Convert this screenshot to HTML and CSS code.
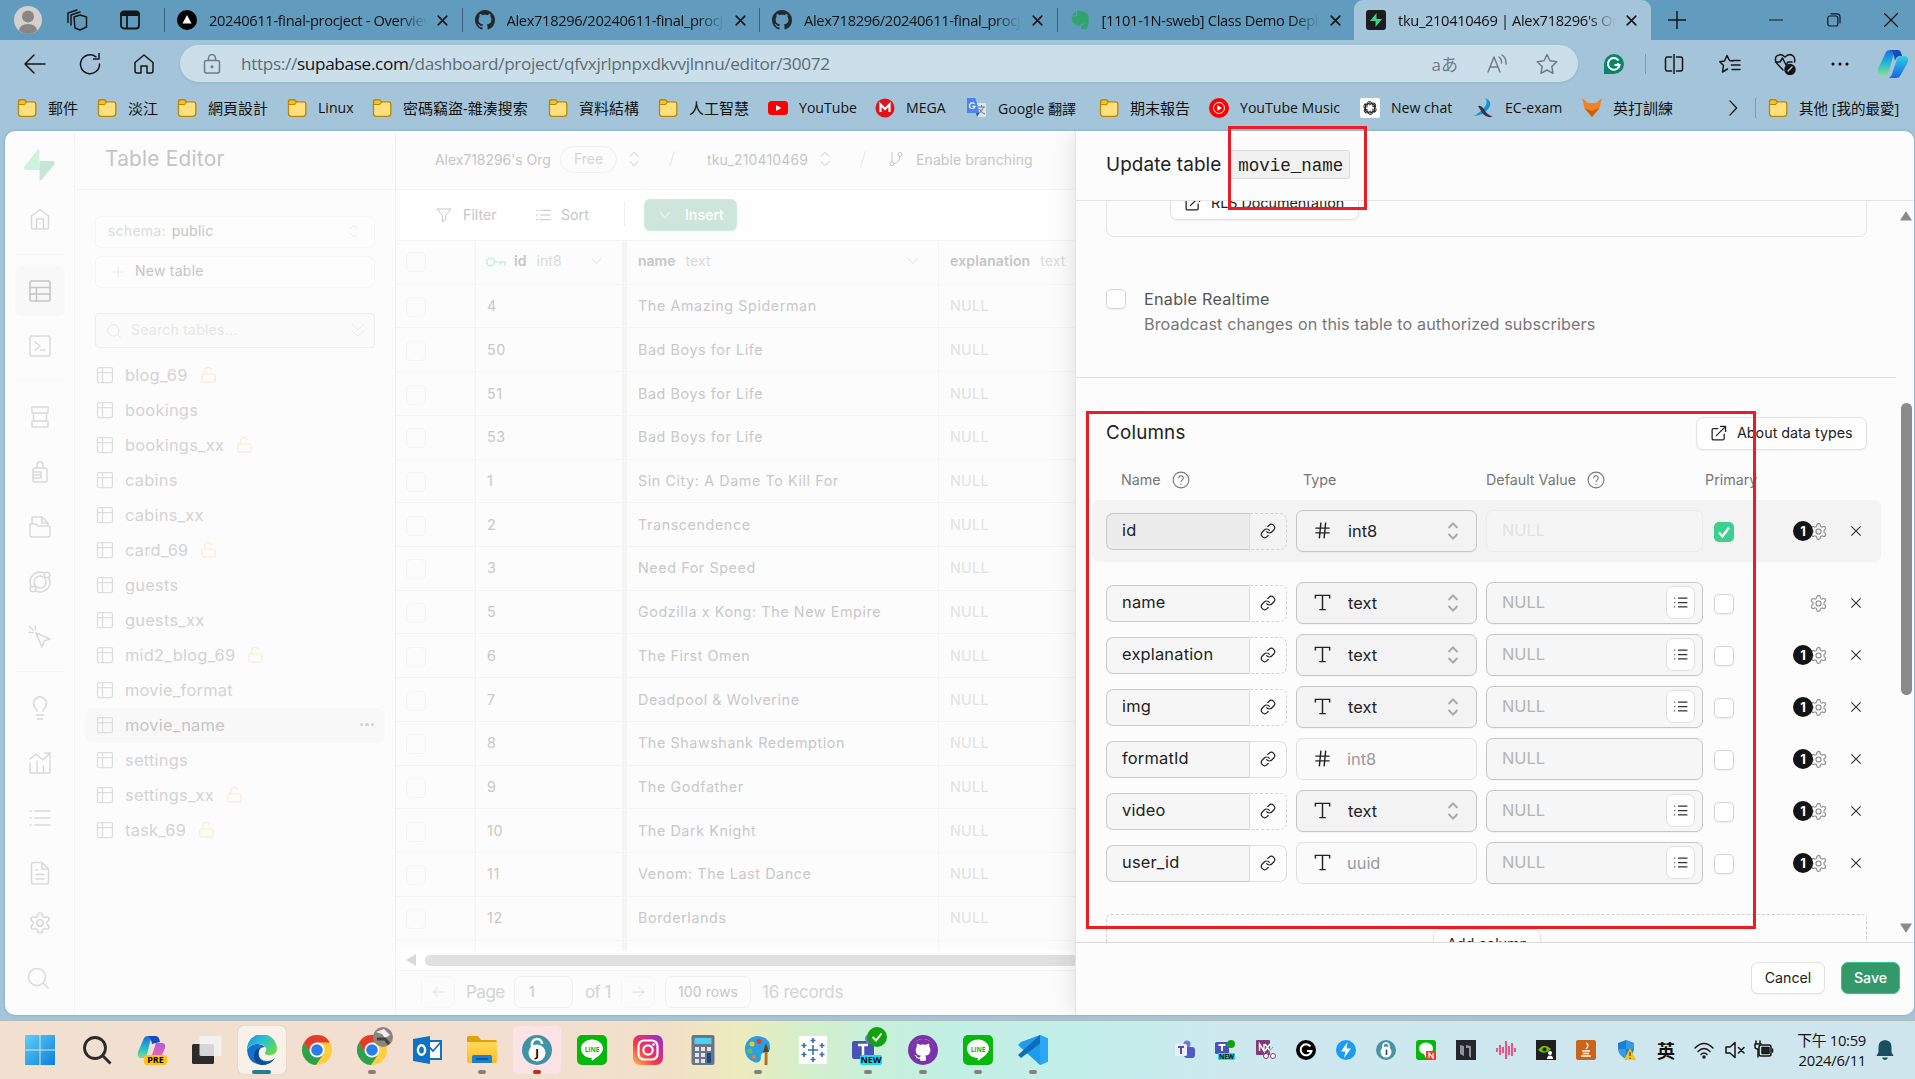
FILE: index.html
```html
<!DOCTYPE html>
<html lang="zh-Hant">
<head>
<meta charset="utf-8">
<title>tku_210410469 | Alex718296's Org | Supabase</title>
<link rel="stylesheet" href="styles.css">
</head>
<body>
<svg class="defs" aria-hidden="true">
  <defs>
    <linearGradient id="g-edge" x1="0" y1="0" x2="1" y2=".6"><stop offset="0" stop-color="#1a8fe0"/><stop offset=".5" stop-color="#2bbfd8"/><stop offset="1" stop-color="#5fd84f"/></linearGradient>
    <linearGradient id="g-ig" x1="0" y1="1" x2="1" y2="0"><stop offset="0" stop-color="#fdc04b"/><stop offset=".4" stop-color="#f2384a"/><stop offset=".75" stop-color="#c32aa3"/><stop offset="1" stop-color="#6a45d6"/></linearGradient>
    <linearGradient id="g-cop1" x1="0" y1="0" x2="0" y2="1"><stop offset="0" stop-color="#1a6fd8"/><stop offset=".5" stop-color="#20b4d8"/><stop offset="1" stop-color="#7fe08a"/></linearGradient>
    <linearGradient id="g-cop2" x1="0" y1="0" x2="0" y2="1"><stop offset="0" stop-color="#2fd0e0"/><stop offset="1" stop-color="#1a62e8"/></linearGradient>
    <linearGradient id="g-cop3" x1="0" y1="0" x2="0" y2="1"><stop offset="0" stop-color="#b25be8"/><stop offset="1" stop-color="#f46a8c"/></linearGradient>
    <linearGradient id="g-win" x1="0" y1="0" x2="1" y2="1"><stop offset="0" stop-color="#5fd0fa"/><stop offset="1" stop-color="#0a7fd6"/></linearGradient>
    <linearGradient id="g-fold" x1="0" y1="0" x2="0" y2="1"><stop offset="0" stop-color="#ffd95c"/><stop offset="1" stop-color="#fbbd22"/></linearGradient>
  </defs>
  <symbol id="folder" viewBox="0 0 20 20"><path d="M1.5 3.5Q1.500 1.800 3.200 1.800H7.500L9.500 3.800H16.500Q18.800 3.800 18.800 6V15.500Q18.800 18.300 16 18.300H4Q1.500 18.300 1.500 15.500Z" fill="#ffe07d" stroke="#b8860b" stroke-width="1.300"/><path d="M1.600 6.500V3.800Q1.600 1.900 3.500 1.900H7.500L9.500 4 7.500 6.500Z" fill="#f5c518" stroke="#b8860b" stroke-width="1.200"/></symbol>
  <symbol id="x" viewBox="0 0 24 24"><path d="M4 4 20 20M20 4 4 20"/></symbol>
  <symbol id="github" viewBox="0 0 16 16"><path d="M8 0C3.580 0 0 3.580 0 8c0 3.540 2.290 6.530 5.470 7.590.4.070.55-.17.55-.38 0-.19-.01-.82-.01-1.490-2.010.37-2.530-.49-2.690-.94-.09-.23-.48-.94-.82-1.130-.28-.15-.68-.52-.01-.53.630-.01 1.080.58 1.230.82.720 1.210 1.870.87 2.330.66.070-.52.280-.87.510-1.070-1.780-.2-3.640-.89-3.640-3.950 0-.87.310-1.590.82-2.150-.08-.2-.36-1.020.080-2.120 0 0 .67-.21 2.200.82.640-.18 1.320-.27 2-.27s1.360.09 2 .27c1.530-1.040 2.200-.82 2.200-.82.440 1.100.160 1.920.080 2.120.51.560.82 1.270.82 2.150 0 3.070-1.870 3.750-3.650 3.950.29.250.54.730.54 1.480 0 1.070-.01 1.930-.01 2.200 0 .21.150.46.550.38A8.010 8.010 0 0 0 16 8c0-4.420-3.580-8-8-8Z"/></symbol>
  <symbol id="tbl" viewBox="0 0 24 24"><rect x="3" y="3" width="18" height="18" rx="2"/><path d="M3 9H21M9 3V21"/></symbol>
  <symbol id="unlock" viewBox="0 0 24 24"><rect x="2.500" y="11.500" width="19" height="11" rx="2"/><path d="M6.500 11.500V7a5 5 0 0 1 9.800-1.200"/></symbol>
  <symbol id="updown" viewBox="0 0 24 24"><path d="m6 8 6-6 6 6M6 16l6 6 6-6"/></symbol>
  <symbol id="down" viewBox="0 0 24 24"><path d="m5 8 7 8 7-8"/></symbol>
  <symbol id="ext" viewBox="0 0 24 24"><path d="M20 13v6a2 2 0 0 1-2 2H5a2 2 0 0 1-2-2V7a2 2 0 0 1 2-2h6M15 2h7v7M9 15 22 2"/></symbol>
  <symbol id="link" viewBox="0 0 24 24"><path d="M10 13a5 5 0 0 0 7.540.54l3-3a5 5 0 0 0-7.070-7.070l-1.720 1.710M14 11a5 5 0 0 0-7.540-.54l-3 3a5 5 0 0 0 7.070 7.070l1.710-1.710"/></symbol>
  <symbol id="hash" viewBox="0 0 24 24"><path d="M3 9H21M3 15H21M10 2 8 22M16 2l-2 20"/></symbol>
  <symbol id="tee" viewBox="0 0 24 24"><path d="M3 7V3H21V7M12 3V21M8 21H16"/></symbol>
  <symbol id="list" viewBox="0 0 24 24"><path d="M8 5H23M8 12H23M8 19H23M2 5h1.500M2 12h1.500M2 19h1.500"/></symbol>
  <symbol id="gear" viewBox="0 0 24 24"><path d="M12.220 2h-.44a2 2 0 0 0-2 2v.18a2 2 0 0 1-1 1.730l-.43.25a2 2 0 0 1-2 0l-.15-.08a2 2 0 0 0-2.730.73l-.22.38a2 2 0 0 0 .73 2.730l.15.1a2 2 0 0 1 1 1.720v.51a2 2 0 0 1-1 1.740l-.15.09a2 2 0 0 0-.73 2.730l.22.38a2 2 0 0 0 2.730.73l.15-.08a2 2 0 0 1 2 0l.43.25a2 2 0 0 1 1 1.730V20a2 2 0 0 0 2 2h.44a2 2 0 0 0 2-2v-.18a2 2 0 0 1 1-1.730l.43-.25a2 2 0 0 1 2 0l.15.08a2 2 0 0 0 2.730-.73l.22-.39a2 2 0 0 0-.73-2.730l-.15-.08a2 2 0 0 1-1-1.740v-.5a2 2 0 0 1 1-1.740l.15-.09a2 2 0 0 0 .73-2.730l-.22-.38a2 2 0 0 0-2.730-.73l-.15.08a2 2 0 0 1-2 0l-.43-.25a2 2 0 0 1-1-1.730V4a2 2 0 0 0-2-2z"/><circle cx="12" cy="12" r="3.200"/></symbol>
  <symbol id="help" viewBox="0 0 24 24"><circle cx="12" cy="12" r="10.500"/><path d="M9 9a3 3 0 0 1 6 .8c0 2-3 2.600-3 4.200M12 17.500v.4"/></symbol>
  <symbol id="search" viewBox="0 0 24 24"><circle cx="11" cy="11" r="8.500"/><path d="m22 22-5-5"/></symbol>
  <symbol id="line" viewBox="0 0 30 30"><rect width="30" height="30" rx="5" fill="#06b80b"/><path d="M15 4.500c6 0 11 4 11 9 0 4.500-5 8-10.500 12-.8.500-1-.2-.8-2.400C8.500 22.800 4 19 4 13.500c0-5 5-9 11-9Z" fill="#fff"/><text x="15" y="16.500" font-size="6.500" font-weight="700" text-anchor="middle" fill="#06b80b">LINE</text></symbol>
  <symbol id="chrome" viewBox="0 0 30 30"><circle cx="15" cy="15" r="15" fill="#ffcd40"/><path d="M2 7.500A15 15 0 0 0 14 30L21.500 18.700 9 18.500Z" fill="#2ba24c"/><path d="M2 7.500A15 15 0 0 1 28 7.500H15L9 19Z" fill="#e33b2e"/><circle cx="15" cy="15" r="7.500" fill="#fff"/><circle cx="15" cy="15" r="5.800" fill="#2b7de9"/></symbol>
</svg>

<header class="browser">
  <div class="tabstrip">
    <div class="winctl-left">
      <svg width="28" height="28" viewBox="0 0 28 28"><circle cx="14" cy="14" r="14" fill="#d3d0cd"/><circle cx="14" cy="10.500" r="6" fill="#8a8684"/><path d="M5 24.500Q6 18 14 18T23 24.500Q19 28 14 28T5 24.500Z" fill="#8a8684"/></svg>
      <svg class="st" width="24" height="24" viewBox="0 0 24 24"><path d="M9 9 15 7 21.500 9V19L15 22 10 20ZM6 17V7L15 4M3 14.500V5L12 2"/></svg>
      <svg class="st" width="22" height="22" viewBox="0 0 22 22" stroke-width="2"><rect x="2" y="2.500" width="18" height="17" rx="3"/><path class="bar" d="M3 5H19"/><path d="M8 6V19"/></svg>
    </div>
    <div class="tab"><svg width="20" height="20" viewBox="0 0 20 20"><circle cx="10" cy="10" r="10"/><path d="M10 5 14.500 13.500H5.500Z" fill="#fff"/></svg><span>20240611-final-procject - Overview</span><svg class="st tx"><use href="#x"/></svg></div>
    <div class="tab"><svg width="20" height="20" fill="#24292f"><use href="#github"/></svg><span>Alex718296/20240611-final_procject</span><svg class="st tx"><use href="#x"/></svg></div>
    <div class="tab"><svg width="20" height="20" fill="#24292f"><use href="#github"/></svg><span>Alex718296/20240611-final_procject</span><svg class="st tx"><use href="#x"/></svg></div>
    <div class="tab"><svg width="20" height="20" viewBox="0 0 20 20" fill="#2fa56c"><path d="M2 5.500 6 1.500V5.500ZM7 1Q12 0 15 2.500 18 3 18.500 7 19.500 19 14.500 19.500 10.500 19.500 11 16 12 14 14 15V13.500Q10 13 10 16 4 15.500 2 10 1 7 2 6.500H7Z"/></svg><span>[1101-1N-sweb] Class Demo Deployment</span><svg class="st tx"><use href="#x"/></svg></div>
    <div class="tab on"><svg width="20" height="20" viewBox="0 0 20 20"><rect width="20" height="20" rx="3" fill="#1c1c1c"/><path d="M10.500 3v6H16L9.500 17V11H4Z" fill="#3ecf8e"/></svg><span>tku_210410469 | Alex718296's Org</span><svg class="st tx"><use href="#x"/></svg></div>
    <svg class="st plus" width="18" height="18" viewBox="0 0 18 18"><path d="M9 0V18M0 9H18"/></svg>
    <div class="winctl">
      <svg class="st" width="14" height="14" viewBox="0 0 14 14"><path d="M0 7H14"/></svg>
      <svg class="st" width="14" height="14" viewBox="0 0 14 14"><rect x=".8" y="3" width="10" height="10" rx="2"/><path d="M4 .8H10Q13 .8 13 4V10"/></svg>
      <svg class="st" width="14" height="14" viewBox="0 0 14 14"><path d="M.5.500 13.500 13.500M13.500.500.500 13.500"/></svg>
    </div>
  </div>
  <div class="toolbar">
    <div class="nav">
      <svg class="st" width="22" height="20" viewBox="0 0 22 20"><path d="M21 10H1M10 1 1 10l9 9"/></svg>
      <svg class="st" width="22" height="22" viewBox="0 0 22 22"><path d="M20.500 11A9.500 9.500 0 1 1 17 3.800M20 .5V6H14.500"/></svg>
      <svg class="st" width="20" height="20" viewBox="0 0 20 20"><path d="M1 8.500 10 1l9 7.500V17q0 2-2 2H13V12H7v7H3q-2 0-2-2Z"/></svg>
    </div>
    <div class="omni">
      <svg class="st grey" width="18" height="20" viewBox="0 0 18 20"><rect x="1.500" y="6.500" width="15" height="12.500" rx="2"/><path d="M5.500 6V4a3.500 3.500 0 0 1 7 0V6"/><circle cx="9" cy="12.800" r=".8"/></svg>
      <div class="url">https://<b>supabase.com</b>/dashboard/project/qfvxjrlpnpxdkvvjlnnu/editor/30072</div>
      <span class="aa">aあ</span>
      <svg class="st grey" width="20" height="20" viewBox="0 0 20 20"><path d="M1 18 7 3l6 15M3 13h8M12 3q3 2 2.500 6M15 1q4.500 3 4 9"/></svg>
      <svg class="st grey" width="22" height="22" viewBox="0 0 22 22"><path d="m11 1.500 3 6.300 6.800.9-5 4.800 1.200 6.800-6-3.300-6 3.300 1.200-6.800-5-4.800 6.800-.9Z"/></svg>
    </div>
    <div class="ext">
      <svg width="20" height="20" viewBox="0 0 20 20"><path d="M0 10a10 10 0 1 1 10 10H0Z" fill="#0e8467"/><path d="M14.500 6.500A5.800 5.800 0 1 0 15.500 11H10.500M13 9.500 15.500 11 14.500 14" fill="none" stroke="#fff" stroke-width="2"/></svg>
      <i></i>
      <svg class="st" width="20" height="20" viewBox="0 0 20 20"><path d="M7.500 3H3.500q-2 0-2 2V15q0 2 2 2H7.500M12.500 3h4q2 0 2 2V15q0 2-2 2h-4M10 0V20"/></svg>
      <svg class="st" width="22" height="20" viewBox="0 0 22 20"><path d="M14 7 10.500 6.500 8 1.500 5.500 7 .8 7.800 4.500 11.500 3.500 18 8.500 15M14 6.500H21M12.500 11H21M13 15.500h8"/></svg>
      <svg class="st" width="22" height="22" viewBox="0 0 22 22"><path d="M9 17 2.500 10Q0 5.500 3 2.800 7 0 11 4 15 0 19 2.800 21.500 5 20.500 9M1.500 9H6L8.500 5l3.500 7L14 9h4"/><circle cx="16" cy="16.500" r="5" fill="#111"/><path d="m14 18 4-4" stroke="#a4c5d9"/></svg>
      <svg width="18" height="4" viewBox="0 0 18 4"><circle cx="2" cy="2" r="1.500"/><circle cx="9" cy="2" r="1.500"/><circle cx="16" cy="2" r="1.500"/></svg>
      <svg width="32" height="28" viewBox="0 0 32 28"><path d="M9 2Q10 0 13 0H21Q17 2 16 7L12 21Q11 25 8 25H4Q0 24 1 19Z" fill="url(#g-cop1)"/><path d="M23 26Q22 28 19 28H12Q15 26 16 21L20 9Q21 6 24 6H28Q32 7 31 12Z" fill="url(#g-cop2)"/><path d="M13 0h8q3 0 4 6h-3q-3 1-4 5L17 6Q16 1 13 0Z" fill="#1a4bbd"/></svg>
    </div>
  </div>
  <nav class="bookmarks">
    <a><svg><use href="#folder"/></svg>郵件</a>
    <a><svg><use href="#folder"/></svg>淡江</a>
    <a><svg><use href="#folder"/></svg>網頁設計</a>
    <a class="en"><svg><use href="#folder"/></svg>Linux</a>
    <a><svg><use href="#folder"/></svg>密碼竊盜-雜湊搜索</a>
    <a><svg><use href="#folder"/></svg>資料結構</a>
    <a><svg><use href="#folder"/></svg>人工智慧</a>
    <a class="en"><svg viewBox="0 0 20 20"><rect y="3" width="20" height="14" rx="3.500" fill="#f00"/><path d="m8 7 5.500 3L8 13Z" fill="#fff"/></svg>YouTube</a>
    <a class="en"><svg viewBox="0 0 20 20"><circle cx="10" cy="10" r="9.500" fill="#e0131c"/><path d="M5.500 14V6.500L10 11l4.500-4.500V14" fill="none" stroke="#fff" stroke-width="2.200"/></svg>MEGA</a>
    <a class="en"><svg viewBox="0 0 20 20"><path d="M7 5H19V19H10Z" fill="#dfe3e8"/><path d="M11 9H18M14.500 7V9M16.500 9Q15 14 11 16M12.500 11Q14 15 18 16" stroke="#6b7785" fill="none"/><path d="M0 0H8.500L12.500 15H0Z" fill="#4a86f0"/><path d="M9 15h3.500L10 19Z" fill="#2a55b8"/><path d="M7.500 6A2.800 2.800 0 1 0 8 8.300H5.500" fill="none" stroke="#fff" stroke-width="1.200"/></svg>Google 翻譯</a>
    <a><svg><use href="#folder"/></svg>期末報告</a>
    <a class="en"><svg viewBox="0 0 20 20"><circle cx="10" cy="10" r="10" fill="#f00"/><circle cx="10" cy="10" r="5.500" fill="none" stroke="#fff"/><path d="m8.300 7 4.500 3-4.500 3Z" fill="#fff"/></svg>YouTube Music</a>
    <a class="en"><svg viewBox="0 0 20 20"><rect width="20" height="20" rx="2" fill="#fff"/><g fill="none" stroke="#222" stroke-width="1"><path id="petal" d="M7 9.500V6a2.600 2.600 0 0 1 4.800-1.200M7 6.500 10 4.800l4 2.300"/><use href="#petal" transform="rotate(60 10 10)"/><use href="#petal" transform="rotate(120 10 10)"/><use href="#petal" transform="rotate(180 10 10)"/><use href="#petal" transform="rotate(240 10 10)"/><use href="#petal" transform="rotate(300 10 10)"/></g></svg>New chat</a>
    <a class="en"><svg viewBox="0 0 20 20"><path d="M11 0Q19 3 15 10 10 17 0 18 8 13 11.500 8 14 3 11 0Z" fill="#1593d2"/><path d="M4 8Q7 7 10.500 12 14 18 19 18 14 21 9 16Z" fill="#334"/></svg>EC-exam</a>
    <a><svg viewBox="0 0 20 20"><path d="M0 0 6 5H14L20 0 17.500 10 10 19 2.500 10Z" fill="#f5821f"/><path d="m2.500 10 7.500 9 7.500-9L10 13Z" fill="#c95f0c"/></svg>英打訓練</a>
    <svg class="st chev" viewBox="0 0 10 18"><path d="m1 1 7.500 8L1 17"/></svg>
    <i></i>
    <a class="mix"><svg><use href="#folder"/></svg>其他 [我的最愛]</a>
  </nav>
</header>

<main class="page">
  <aside class="rail">
    <svg class="logo" width="31" height="32" viewBox="0 0 31 32"><path d="M13.500.8Q15.500-.8 15.500 1.500V21H2Q-.8 20 .8 17Z" fill="#cdf2e0"/><path d="M15.500 12H29Q32 13 30 16L17.500 31Q15.500 32 15.500 30Z" fill="#c3e6d5"/></svg>
    <div class="ri"><svg viewBox="0 0 24 24"><path d="M3.500 9 12 2.500 20.500 9V20a2 2 0 0 1-2 2H5.500a2 2 0 0 1-2-2ZM8.500 22V12h7V22"/></svg></div>
    <hr>
    <div class="ri act"><svg viewBox="0 0 24 24"><rect x="2" y="2" width="20" height="20" rx="1.500"/><path d="M2 8.500H22M2 15H22M8.500 8.500V22"/></svg></div>
    <div class="ri"><svg viewBox="0 0 24 24"><rect x="2" y="2" width="20" height="20" rx="1.500"/><path d="m7 8 5 4-5 4M12.500 16H17"/></svg></div>
    <hr>
    <div class="ri"><svg viewBox="0 0 24 24"><path d="M4 2H20V8H4ZM4 16H20V22H4ZM5.500 8V16M18.500 8V16"/></svg></div>
    <div class="ri"><svg viewBox="0 0 24 24"><rect x="5" y="8" width="14" height="14" rx="2"/><path d="M9 8V5a3 3 0 0 1 6 0V8M5 12h8v6H5M5 15h8"/></svg></div>
    <div class="ri"><svg viewBox="0 0 24 24"><path d="M2 9H8L10 11H20q2 0 2 2V20q0 2-2 2H4q-2 0-2-2ZM4 9V2H14L20 8V11M14 2V8H20"/></svg></div>
    <div class="ri"><svg viewBox="0 0 24 24"><circle cx="12" cy="12" r="10"/><circle cx="12" cy="12" r="6"/><circle class="f" cx="19" cy="5" r="2.800"/><circle class="f" cx="5" cy="19" r="2.800"/></svg></div>
    <div class="ri"><svg viewBox="0 0 24 24"><path d="M8 8 22 14 16 16 14 22ZM1.500 1.500 5 5M7.500 1V5M1 7.500H5"/></svg></div>
    <hr>
    <div class="ri"><svg viewBox="0 0 24 24"><path d="M9 15Q9 13 7 11.500A6.500 6.500 0 1 1 17 11.500Q15 13 15 15M8.500 19h7M9.500 23h5"/></svg></div>
    <div class="ri"><svg viewBox="0 0 24 24"><path d="M2 12V22H22V9M9 22V10M15.500 22V15M2 8 8 3l7 6L22 2M17 2h5V7"/></svg></div>
    <div class="ri"><svg viewBox="0 0 24 24"><path d="M7 5H22M7 12H22M7 19H22M2 5h1M2 12h1M2 19h1"/></svg></div>
    <div class="ri"><svg viewBox="0 0 24 24"><path d="M14 1.500H5.500q-2 0-2 2V21q0 2 2 2H18.500q2 0 2-2V8ZM14 1.500V8H20.500M8 9h2M8 13.500h8M8 18h8"/></svg></div>
    <div class="ri"><svg><use href="#gear"/></svg></div>
    <div class="ri sr"><svg><use href="#search"/></svg></div>
  </aside>

  <aside class="tables">
    <h1>Table Editor</h1>
    <div class="box schema"><span>schema:</span> public<svg class="si"><use href="#updown"/></svg></div>
    <div class="box newt"><svg class="si" viewBox="0 0 24 24"><path d="M12 3V21M3 12H21"/></svg>New table</div>
    <div class="box find"><svg class="si"><use href="#search"/></svg>Search tables...<svg class="si" viewBox="0 0 24 24"><path d="m3 3 9 8 9-8M3 13l9 8 9-8"/></svg></div>
    <ul>
      <li><svg><use href="#tbl"/></svg>blog_69<svg class="u"><use href="#unlock"/></svg></li>
      <li><svg><use href="#tbl"/></svg>bookings</li>
      <li><svg><use href="#tbl"/></svg>bookings_xx<svg class="u"><use href="#unlock"/></svg></li>
      <li><svg><use href="#tbl"/></svg>cabins</li>
      <li><svg><use href="#tbl"/></svg>cabins_xx</li>
      <li><svg><use href="#tbl"/></svg>card_69<svg class="u"><use href="#unlock"/></svg></li>
      <li><svg><use href="#tbl"/></svg>guests</li>
      <li><svg><use href="#tbl"/></svg>guests_xx</li>
      <li><svg><use href="#tbl"/></svg>mid2_blog_69<svg class="u"><use href="#unlock"/></svg></li>
      <li><svg><use href="#tbl"/></svg>movie_format</li>
      <li class="cur"><svg><use href="#tbl"/></svg>movie_name<em><b></b><b></b><b></b></em></li>
      <li><svg><use href="#tbl"/></svg>settings</li>
      <li><svg><use href="#tbl"/></svg>settings_xx<svg class="u"><use href="#unlock"/></svg></li>
      <li><svg><use href="#tbl"/></svg>task_69<svg class="u"><use href="#unlock"/></svg></li>
    </ul>
  </aside>

  <section class="editor">
    <div class="crumbs"><span class="org">Alex718296's Org</span><span class="pill">Free</span><svg class="si c1"><use href="#updown"/></svg><svg class="si sl" viewBox="0 0 8 20"><path d="M7 1 1 19"/></svg><span class="prj">tku_210410469</span><svg class="si c2"><use href="#updown"/></svg><svg class="si sl s2" viewBox="0 0 8 20"><path d="M7 1 1 19"/></svg><svg class="si br" viewBox="0 0 24 24"><path d="M6 2V16M18 8Q18 17 9 19"/><circle cx="18" cy="5" r="3"/><circle cx="6" cy="19" r="3"/></svg><span class="enb">Enable branching</span></div>
    <div class="actions"><svg class="si" viewBox="0 0 24 24"><path d="M2 3H22L14.500 12.500V19L9.500 22V12.500Z"/></svg><span class="fl">Filter</span><svg class="si"><use href="#list"/></svg><span class="so">Sort</span><i></i><div class="insert"><svg class="si"><use href="#down"/></svg>Insert</div></div>
    <div class="grid">
      <div class="r h"><div><i class="cb"></i></div><div><svg class="key" viewBox="0 0 20 12"><circle cx="4.500" cy="6" r="3.800"/><path d="M8.500 6H19V9.500M14.500 6V9"/></svg><b>id</b><span>int8</span><svg class="si"><use href="#down"/></svg></div><div><b>name</b><span>text</span><svg class="si"><use href="#down"/></svg></div><div><b>explanation</b><span>text</span></div></div>
      <div class="r"><div><i class="cb"></i></div><div>4</div><div>The Amazing Spiderman</div><div>NULL</div></div>
      <div class="r"><div><i class="cb"></i></div><div>50</div><div>Bad Boys for Life</div><div>NULL</div></div>
      <div class="r"><div><i class="cb"></i></div><div>51</div><div>Bad Boys for Life</div><div>NULL</div></div>
      <div class="r"><div><i class="cb"></i></div><div>53</div><div>Bad Boys for Life</div><div>NULL</div></div>
      <div class="r"><div><i class="cb"></i></div><div>1</div><div>Sin City: A Dame To Kill For</div><div>NULL</div></div>
      <div class="r"><div><i class="cb"></i></div><div>2</div><div>Transcendence</div><div>NULL</div></div>
      <div class="r"><div><i class="cb"></i></div><div>3</div><div>Need For Speed</div><div>NULL</div></div>
      <div class="r"><div><i class="cb"></i></div><div>5</div><div>Godzilla x Kong: The New Empire</div><div>NULL</div></div>
      <div class="r"><div><i class="cb"></i></div><div>6</div><div>The First Omen</div><div>NULL</div></div>
      <div class="r"><div><i class="cb"></i></div><div>7</div><div>Deadpool &amp; Wolverine</div><div>NULL</div></div>
      <div class="r"><div><i class="cb"></i></div><div>8</div><div>The Shawshank Redemption</div><div>NULL</div></div>
      <div class="r"><div><i class="cb"></i></div><div>9</div><div>The Godfather</div><div>NULL</div></div>
      <div class="r"><div><i class="cb"></i></div><div>10</div><div>The Dark Knight</div><div>NULL</div></div>
      <div class="r"><div><i class="cb"></i></div><div>11</div><div>Venom: The Last Dance</div><div>NULL</div></div>
      <div class="r"><div><i class="cb"></i></div><div>12</div><div>Borderlands</div><div>NULL</div></div>
      <div class="r"><div></div><div></div><div></div><div></div></div>
    </div>
    <div class="hscroll"><svg width="10" height="12" viewBox="0 0 10 12"><path d="M10 0V12L0 6Z" fill="#d8d8d8"/></svg><div></div></div>
    <div class="pager"><div class="pb ar"><svg class="si" viewBox="0 0 24 24"><path d="M22 12H2M11 3 2 12l9 9"/></svg></div><span class="pg">Page</span><div class="pb in">1</div><span class="of">of 1</span><div class="pb ar"><svg class="si" viewBox="0 0 24 24"><path d="M2 12H22M13 3l9 9-9 9"/></svg></div><div class="pb rw">100 rows</div><span class="rec">16 records</span></div>
  </section>

  <section class="panel">
    <header>Update table <code>movie_name</code></header>
    <div class="body">
      <div class="content">
        <div class="card"><div class="btn"><svg class="si"><use href="#ext"/></svg>RLS Documentation</div></div>
        <div class="rt"><i class="cb"></i><div><p>Enable Realtime</p><p class="d">Broadcast changes on this table to authorized subscribers</p></div></div>
        <div class="colhead"><h2>Columns</h2><div class="btn"><svg class="si"><use href="#ext"/></svg>About data types</div></div>
        <div class="labels"><span>Name <svg class="si"><use href="#help"/></svg></span><span>Type</span><span>Default Value <svg class="si"><use href="#help"/></svg></span><span>Primary</span></div>
        <div class="cr first"><div class="nm">id</div><div class="lk"><svg><use href="#link"/></svg></div><div class="ty"><svg><use href="#hash"/></svg>int8<svg class="ud"><use href="#updown"/></svg></div><div class="df dis">NULL</div><i class="cb ck"><svg viewBox="0 0 20 20"><path d="m5 10.500 3.500 4 6.500-9"/></svg></i><div class="cfg"><b>1</b><svg><use href="#gear"/></svg></div><svg class="rm"><use href="#x"/></svg></div>
        <div class="cr"><div class="nm">name</div><div class="lk"><svg><use href="#link"/></svg></div><div class="ty"><svg><use href="#tee"/></svg>text<svg class="ud"><use href="#updown"/></svg></div><div class="df">NULL<div><svg><use href="#list"/></svg></div></div><i class="cb"></i><div class="cfg"><svg><use href="#gear"/></svg></div><svg class="rm"><use href="#x"/></svg></div>
        <div class="cr"><div class="nm">explanation</div><div class="lk"><svg><use href="#link"/></svg></div><div class="ty"><svg><use href="#tee"/></svg>text<svg class="ud"><use href="#updown"/></svg></div><div class="df">NULL<div><svg><use href="#list"/></svg></div></div><i class="cb"></i><div class="cfg"><b>1</b><svg><use href="#gear"/></svg></div><svg class="rm"><use href="#x"/></svg></div>
        <div class="cr"><div class="nm">img</div><div class="lk"><svg><use href="#link"/></svg></div><div class="ty"><svg><use href="#tee"/></svg>text<svg class="ud"><use href="#updown"/></svg></div><div class="df">NULL<div><svg><use href="#list"/></svg></div></div><i class="cb"></i><div class="cfg"><b>1</b><svg><use href="#gear"/></svg></div><svg class="rm"><use href="#x"/></svg></div>
        <div class="cr"><div class="nm">formatId</div><div class="lk linked"><svg><use href="#link"/></svg></div><div class="ty ro"><svg><use href="#hash"/></svg>int8</div><div class="df">NULL</div><i class="cb"></i><div class="cfg"><b>1</b><svg><use href="#gear"/></svg></div><svg class="rm"><use href="#x"/></svg></div>
        <div class="cr"><div class="nm">video</div><div class="lk"><svg><use href="#link"/></svg></div><div class="ty"><svg><use href="#tee"/></svg>text<svg class="ud"><use href="#updown"/></svg></div><div class="df">NULL<div><svg><use href="#list"/></svg></div></div><i class="cb"></i><div class="cfg"><b>1</b><svg><use href="#gear"/></svg></div><svg class="rm"><use href="#x"/></svg></div>
        <div class="cr"><div class="nm">user_id</div><div class="lk linked"><svg><use href="#link"/></svg></div><div class="ty ro"><svg><use href="#tee"/></svg>uuid</div><div class="df">NULL<div><svg><use href="#list"/></svg></div></div><i class="cb"></i><div class="cfg"><b>1</b><svg><use href="#gear"/></svg></div><svg class="rm"><use href="#x"/></svg></div>
        <div class="addbox"><div class="btn">Add column</div></div>
      </div>
      <div class="vscroll"><svg width="12" height="10" viewBox="0 0 12 10"><path d="M6 0 12 9.500H0Z"/></svg><div></div><svg width="12" height="10" viewBox="0 0 12 10"><path d="M6 10 12 .5H0Z"/></svg></div>
    </div>
    <footer><div class="btn cancel">Cancel</div><div class="btn save">Save</div></footer>
  </section>
</main>
<div class="mark m1"></div>
<div class="mark m2"></div>

<footer class="taskbar">
  <div class="apps">
    <div><svg viewBox="0 0 30 30" fill="url(#g-win)"><path d="M0 0H14.500V14.500H0ZM15.500 0H30V14.500H15.500ZM0 15.500H14.500V30H0ZM15.500 15.500H30V30H15.500Z"/></svg></div>
    <div><svg viewBox="0 0 30 30" fill="none" stroke="#2b2b2b" stroke-width="2.800"><circle cx="13" cy="13" r="10.500"/><path d="m20.500 20.500 8 8"/></svg></div>
    <div><svg viewBox="0 0 30 30"><path d="M7 3Q8 1 11 1H17Q14 3 13 7L10 20Q9 23 6 23H3Q0 22 1 17Z" fill="url(#g-cop1)"/><path d="M11 1h8q3 0 4 6l-8 2Q14 3 11 1Z" fill="#1a4bbd"/><path d="M23 25H12Q15 22 16 17L19 8H26Q29 9 28 13Z" fill="url(#g-cop3)"/><rect x="7" y="20" width="23" height="10" rx="3" fill="#ffc20e"/><text x="18.500" y="28.300" font-size="9" font-weight="700" text-anchor="middle">PRE</text></svg></div>
    <div><svg viewBox="0 0 30 30"><rect y="9" width="22" height="20" rx="1.500" fill="#2b2b2b"/><rect x="7.500" y="1" width="22" height="20" rx="1.500" fill="#f4f4f4" opacity=".85"/></svg></div>
    <div class="hot run"><svg viewBox="0 0 30 30"><path d="M0 15A15 15 0 0 1 30 13Q30 20 23 20 17.500 20 18 17.500 20 15.500 19 13 17 9 11 9 3 9 0 15Z" fill="url(#g-edge)"/><path d="M0 15Q4 8.500 11 9 16 9.500 18 12 12 12 11.500 18 12 26 20 26 25 26 28 23 23 30 15 30 1 29 0 15Z" fill="#1274c8"/><path d="M13 13Q9 21 15 26 21 30 28 23 24 30 15 30 6 28 7 20 8 14 13 13Z" fill="#0c4a92"/></svg></div>
    <div><svg><use href="#chrome"/></svg></div>
    <div class="dot"><svg class="over" viewBox="0 0 36 38"><use href="#chrome" x="0" y="8" width="30" height="30"/><circle cx="26" cy="10" r="10" fill="#8c8480"/><path d="M19 5 27 2l6 6-5 3-3-4Z" fill="#eee"/><path d="m20 12 8 0 4 5" stroke="#443" stroke-width="3" fill="none"/></svg></div>
    <div><svg viewBox="0 0 30 30"><path d="M14 6H29V24H14Z" fill="#fff" stroke="#0f72c6" stroke-width="2"/><path d="m15 10 6 6 8-9" fill="none" stroke="#0f72c6" stroke-width="1.800"/><path d="M1 4 18 1V29L1 26Z" fill="#0f72c6"/><ellipse cx="9.500" cy="15" rx="3.600" ry="4.800" fill="none" stroke="#fff" stroke-width="2.400"/></svg></div>
    <div class="dot"><svg viewBox="0 0 30 30"><path d="M0 3Q0 1 2 1H11L14 5H28Q30 5 30 7V10H0Z" fill="#e0a10c"/><path d="M0 7H30V26q0 2-2 2H2q-2 0-2-2Z" fill="url(#g-fold)"/><path d="M5 28V22Q5 20 7 20H23q2 0 2 2v6Z" fill="#1c7fd0"/><path d="M9 24H21" stroke="#0f5598" stroke-width="2"/></svg></div>
    <div class="pink"><svg viewBox="0 0 30 30"><circle cx="15" cy="15" r="15" fill="#3e93a5"/><path d="M10 14V9a5 5 0 0 1 10 0" fill="none" stroke="#fff" stroke-width="2.500"/><circle cx="15" cy="18" r="8.500" fill="#fff"/><text x="15" y="22" font-size="11" font-weight="700" text-anchor="middle">J</text></svg></div>
    <div><svg><use href="#line"/></svg></div>
    <div><svg viewBox="0 0 30 30"><rect width="30" height="30" rx="7" fill="url(#g-ig)"/><g fill="none" stroke="#fff" stroke-width="2.200"><rect x="5.500" y="5.500" width="19" height="19" rx="5.500"/><circle cx="15" cy="15" r="4.700"/></g><circle cx="20.500" cy="9.500" r="1.300" fill="#fff"/></svg></div>
    <div><svg viewBox="0 0 30 30"><rect x="3.500" width="23" height="30" rx="2" fill="#6b7682"/><rect x="6.500" y="3" width="17" height="6" fill="#4fd0f5"/><path d="M7 12h4v4H7ZM13 12h4v4H13ZM19 12h4v4H19ZM7 18h4v4H7ZM13 18h4v4H13ZM7 24h4v4H7ZM13 24h4v4H13Z" fill="#dfe4e8"/><path d="M19 18h4V28H19Z" fill="#0f4b8f"/></svg></div>
    <div class="dot"><svg viewBox="0 0 30 30"><path d="M14 1Q28 2 27 14 26 18 20 18 17 19 18 23 17 29 11 27 1 23 2 12 4 2 14 1Z" fill="#2b9fe0"/><circle cx="9" cy="9" r="2.500" fill="#f5c518"/><circle cx="16" cy="6.500" r="2.500" fill="#e33b2e"/><circle cx="7" cy="16" r="2.500" fill="#5fc04b"/><circle cx="11" cy="22" r="2" fill="#f47c2b"/><path d="M22 10h2.500V30H21.500Z" fill="#b66a2c"/><path d="m20 17 3-9 3 9Z" fill="#6b3d1a"/></svg></div>
    <div><svg viewBox="0 0 30 30"><rect x="1" y="1" width="28" height="28" fill="#fff"/><path d="M15 10V20M10 15H20M15 3V8M12.500 5.500h5M15 22v5M12.500 24.500h5M6 8v5M3.500 10.500h5M24 8v5M21.500 10.500h5M6 17v5M3.500 19.500h5M24 17v5M21.500 19.500h5" stroke="#3a6ea5" stroke-width="1.600"/></svg></div>
    <div class="dot"><svg class="over" viewBox="0 0 36 38"><rect y="14" width="22" height="18" rx="2" fill="#4a52b8"/><circle cx="18" cy="12" r="5" fill="#7079d8"/><path d="M6 18H16M11 18V28" stroke="#fff" stroke-width="2.500"/><rect x="8" y="28" width="22" height="10" rx="2" fill="#18dcf0"/><text x="19" y="36.300" font-size="9" font-weight="700" text-anchor="middle">NEW</text><circle cx="25" cy="10" r="10" fill="#13a10e"/><path d="m20.500 10 3.500 3.500 5.500-7" stroke="#fff" stroke-width="2" fill="none"/></svg></div>
    <div class="dot"><svg viewBox="0 0 30 30"><circle cx="15" cy="15" r="15" fill="#7a33a8"/><circle cx="15" cy="15" r="11" fill="#fff"/><g fill="#7a33a8"><use href="#github" x="3.500" y="4" width="23" height="23"/></g></svg></div>
    <div class="dot"><svg><use href="#line"/></svg></div>
    <div class="dot"><svg viewBox="0 0 30 30"><path d="m22 0 8 3.500V26.500L22 30 0 10 3 7Z" fill="#1f9cf0"/><path d="M22 0 0 20l3 3L22 8.500Z" fill="#0f6cb6"/><path d="M22 0 30 3.500V26.500L22 30Z" fill="#2ba8f5"/></svg></div>
  </div>
  <div class="tray">
    <div><svg viewBox="0 0 20 20"><circle cx="12" cy="4" r="3.500" fill="#7079d8"/><rect x="9" y="7" width="11" height="11" rx="3" fill="#5059c9"/><rect y="4" width="12" height="12" rx="1.500" fill="#eef"/><path d="M3 7H9M6 7V14" stroke="#4a52b8" stroke-width="2"/></svg></div>
    <div><svg viewBox="0 0 20 20"><rect y="2" width="14" height="12" rx="1.500" fill="#4a52b8"/><path d="M3.500 5H10.500M7 5V11" stroke="#fff" stroke-width="1.800"/><circle cx="16" cy="4" r="4" fill="#13a10e"/><rect x="3" y="13" width="17" height="7" rx="1" fill="#18dcf0"/><text x="11.500" y="18.800" font-size="6.500" font-weight="700" text-anchor="middle">NEW</text></svg></div>
    <div><svg viewBox="0 0 20 20"><rect width="14" height="15" rx="1" fill="#80397b"/><path d="M3.500 11V4L8 11V4M9 4l5 7M14 4 9 11" stroke="#fff" stroke-width="1.400" fill="none"/><circle cx="10" cy="16" r="2.500" fill="#fff" stroke="#80397b"/><circle cx="17" cy="16" r="2.500" fill="#fff" stroke="#80397b"/><path d="M11 14 17 7" stroke="#b88"/></svg></div>
    <div><svg viewBox="0 0 20 20"><circle cx="10" cy="10" r="10"/><path d="M14.500 6.500A5.500 5.500 0 1 0 15.500 11H11" fill="none" stroke="#fff" stroke-width="2"/></svg></div>
    <div><svg viewBox="0 0 20 20"><circle cx="10" cy="10" r="10" fill="#1c9cf0"/><path d="M11.500 2 5 11.500H9.500L8 18l7-9.500H10.500Z" fill="#fff"/></svg></div>
    <div><svg viewBox="0 0 20 20"><circle cx="10" cy="10" r="10" fill="#4a93a5"/><path d="M7 9V6a3 3 0 0 1 6 0V9" fill="none" stroke="#fff" stroke-width="1.600"/><circle cx="10" cy="12" r="5.500" fill="#fff"/><path d="M10.500 9.500V15" stroke="#246" stroke-width="1.600"/></svg></div>
    <div><svg viewBox="0 0 20 20"><rect width="20" height="20" rx="3" fill="#06b80b"/><ellipse cx="10" cy="8.500" rx="7" ry="6" fill="#fff"/><path d="m8 14 2 4 2-5Z" fill="#fff"/><rect x="10" y="11" width="10" height="9" fill="#f03a2e"/><path d="M13 18V13l4 5V13" stroke="#fff" stroke-width="1.200" fill="none"/></svg></div>
    <div><svg viewBox="0 0 20 20"><rect width="20" height="20" fill="#24262b"/><path d="M4 5V14L8 16V6ZM10 5l5 1V18L13 16V8H10Z" fill="#8d939c"/></svg></div>
    <div><svg viewBox="0 0 20 20"><path d="M1 8v4M4 5V15M7 7v6M10 1V19M13 6v9M16 3V16M19 8v4" stroke="#f0417a" stroke-width="1.800"/></svg></div>
    <div><svg viewBox="0 0 20 20"><rect width="20" height="20" fill="#1f1f1f"/><path d="M2 10Q8 2 15 9 8 16 2 10Z" fill="#76b900"/><circle cx="8.500" cy="9.500" r="2" fill="#1f1f1f"/><circle cx="14" cy="13" r="2" fill="#fff"/><path d="M11 19Q11 15.500 14 15.500T17 19Z" fill="#fff"/></svg></div>
    <div><svg viewBox="0 0 20 20"><rect width="20" height="20" rx="2" fill="#c9641a"/><path d="M10 3Q14 5 10 9M6 11H14M7 13.500h6M5 16H15" stroke="#fff" stroke-width="1.300" fill="none"/></svg></div>
    <div><svg viewBox="0 0 20 20"><path d="m10 0 8 3V9Q17 16 10 19 3 16 2 9V3Z" fill="#1c7fd0"/><path d="M10 0V19Q3 16 2 9H18V3Z" fill="#4fb3f5" opacity=".5"/><path d="M14 8 20 20H8Z" fill="#ffc20e"/><path d="M14 12v4M14 17.500V19" stroke="#222"/></svg></div>
    <div class="ime">英</div>
    <div class="wifi"><svg viewBox="0 0 20 20" class="st"><path d="M1 8Q10-1 19 8M4 11.500Q10 5.500 16 11.500M7 14.500Q10 11.500 13 14.500"/><circle cx="10" cy="17" r="1"/></svg></div>
    <div class="vol"><svg viewBox="0 0 20 20" class="st"><path d="M1 7H5L10 2.500V17.500L5 13H1ZM13.500 7.500 19 13M19 7.500 13.500 13"/></svg></div>
    <div class="bat"><svg viewBox="0 0 20 20" class="st"><rect x="5" y="5" width="12" height="11" rx="2" fill="none"/><path d="M8 7.500H15V13.500H8Z" fill="#222"/><path d="M18.500 9v3M1 4H7M2 1V4M6 1V4M1 4V7Q1 9 4 9V17"/></svg></div>
    <div class="clock"><span>下午 10:59</span><span>2024/6/11</span></div>
    <svg class="bell" viewBox="0 0 20 20"><path d="M10 0Q16.500.500 16.500 7V12L18.500 16H1.500L3.500 12V7Q3.500.500 10 0ZM7 17.500h6Q12 20 10 20T7 17.500Z" fill="#1b4f5f"/></svg>
  </div>
</footer>
</body>
</html>
```
FILE: styles.css
```css
* { box-sizing: border-box; }
body { margin: 0; width: 1915px; height: 1079px; overflow: hidden; position: relative; background: #a4c5d9; font-family: Inter, "Noto Sans CJK TC", sans-serif; display: flex; flex-direction: column; }
svg { flex: none; display: block; }
p, h1, h2, ul { margin: 0; padding: 0; font-weight: 400; }
.defs { position: absolute; width: 0; height: 0; }
.st { fill: none; stroke: #161616; stroke-width: 1.5; stroke-linecap: round; stroke-linejoin: round; }
.grey { stroke: #6f7c86; }

/* browser chrome */
.browser { height: 131px; font-family: "Open Sans", "Noto Sans CJK TC", sans-serif; color: #111; flex: none; }
.tabstrip { height: 40px; background: #619cbf; display: flex; align-items: center; }
.winctl-left { width: 164px; display: flex; align-items: center; padding-left: 14px; }
.winctl-left svg:nth-child(2) { margin-left: 23px; }
.winctl-left svg:nth-child(3) { margin-left: 30px; stroke-width: 1.8; }
.winctl-left .bar { stroke-width: 4; }
.tab { width: 297.5px; height: 40px; display: flex; align-items: center; padding-left: 13px; position: relative; }
.tab:not(.on)::before { content: ""; position: absolute; left: 0; top: 8px; height: 24px; width: 1px; background: #38637d; }
.tab span { font-size: 14.7px; letter-spacing: -.35px; white-space: nowrap; overflow: hidden; width: 218px; margin-left: 12px; -webkit-mask-image: linear-gradient(90deg, #000 190px, transparent 218px); mask-image: linear-gradient(90deg, #000 190px, transparent 218px); }
.tx { width: 13px; height: 13px; stroke-width: 3; margin-left: 9px; }
.tab.on { background: #a4c5d9; border-radius: 9px 9px 0 0; width: 297px; padding-left: 12px; }
.plus { margin-left: 17px; }
.winctl { margin-left: auto; display: flex; gap: 43.500px; padding-right: 17px; }
.winctl svg { stroke-width: 1.2; }
.toolbar { height: 47px; display: flex; align-items: center; }
.nav { width: 180px; display: flex; align-items: center; padding-left: 24px; gap: 33px; }
.omni { width: 1398px; height: 37px; border-radius: 19px; background: #cbdfea; display: flex; align-items: center; padding: 0 20px 0 23px; box-shadow: 0 1px 3px #8fb3c8; }
.url { flex: 1; margin-left: 20px; font-size: 17.2px; color: #5e6b74; letter-spacing: -.34px; }
.url b { font-weight: 400; color: #111; }
.aa { color: #6f7c86; font-size: 17px; margin-right: 29px; }
.omni svg:last-child { margin-left: 29px; }
.ext { flex: 1; display: flex; align-items: center; padding-left: 26px; }
.ext i { width: 1px; height: 20px; background: #7f9cad; margin: 0 18px 0 21px; }
.ext svg:nth-of-type(3) { margin-left: 35px; }
.ext svg:nth-of-type(4) { margin-left: 33px; }
.ext svg:nth-of-type(5) { margin-left: 35px; }
.ext svg:nth-of-type(6) { margin-left: 28px; }
.bookmarks { height: 41px; display: grid; grid-template-columns: 80px 80px 110px 85px 176px 110px 110px 107px 92px 132px 110px 151px 114px 108px 147px 26px 13px auto; align-items: center; padding-left: 17px; font-size: 15px; white-space: nowrap; }
.bookmarks a { display: flex; align-items: center; gap: 11px; }
.bookmarks .en { font-size: 14.100px; }
.bookmarks .mix { font-size: 14.500px; }
.bookmarks a svg { width: 20px; height: 20px; }
.bookmarks .chev { width: 9px; height: 16px; }
.bookmarks i { width: 1px; height: 20px; background: #7f9cad; }

/* page shell */
.page { margin-left: 5px; width: 1909px; height: 884px; flex: none; background: #fcfcfc; border-radius: 10px; overflow: hidden; display: flex; box-shadow: 0 0 3px #7da3ba; color: #c4c4c4; }
.si { fill: none; stroke: currentColor; stroke-width: 1.5; width: 16px; height: 16px; stroke-linecap: round; stroke-linejoin: round; }
.rail { width: 70px; flex: none; border-right: 1px solid #f4f4f4; display: flex; flex-direction: column; align-items: center; }
.logo { margin: 18px 0 13px; }
.ri { width: 50px; height: 50px; margin-bottom: 4.800px; border-radius: 7px; display: flex; align-items: center; justify-content: center; flex: none; }
.ri svg { width: 24px; height: 24px; fill: none; stroke: #d9d9d9; stroke-width: 1.500; stroke-linejoin: round; stroke-linecap: round; }
.ri .f { fill: #fcfcfc; }
.ri.act { background: #f8f8f8; }
.ri.act svg { stroke: #c4c4c4; }
.ri:nth-last-child(2) { margin-top: -4.500px; }
.ri.sr { margin-right: 4px; }
.rail hr { border: 0; height: 1px; width: 49px; background: #f5f5f5; margin: 5px 0 11px; flex: none; }

.tables { width: 321px; flex: none; border-right: 1px solid #f3f3f3; }
.tables h1 { height: 59px; line-height: 55px; border-bottom: 1px solid #f4f4f4; padding-left: 30px; font-size: 20.800px; letter-spacing: .25px; margin-bottom: 26px; }
.box { margin: 0 20px 8px; height: 32px; border: 1px solid #f5f5f5; border-radius: 7px; display: flex; align-items: center; padding: 0 13px; font-size: 14px; letter-spacing: .25px; padding-bottom: 3px; background: #fdfdfd; }
.box span { color: #dadada; margin-right: 6px; }
.box svg { width: 14px; height: 14px; color: #e3e3e3; }
.schema { padding-left: 12px; }
.schema svg { margin-left: auto; }
.newt svg { margin: 2px 10px 0 2px; width: 14px; }
.newt { margin-bottom: 25px; }
.find { height: 35px; border-color: #eee; border-radius: 4px; color: #e7e7e7; margin-bottom: 10px; background: #fbfbfb; padding: 0 8px 2px 10px; }
.find svg { width: 16px; height: 16px; color: #e7e7e7; margin: 3px 9px 0 0; }
.find svg:last-child { margin: 0 0 0 auto; }
.tables ul { list-style: none; margin: 0 10px; }
.tables li { height: 35px; display: flex; align-items: center; padding: 0 0 2px 10px; font-size: 16.400px; letter-spacing: .25px; color: #d3d3d3; border-radius: 8px; }
.tables li svg { width: 20px; height: 20px; margin-right: 10px; fill: none; stroke: #dedede; stroke-width: 1.500; }
.tables li .u { width: 17px; height: 17px; margin-left: 12px; stroke: #fdecd8; stroke-width: 2; }
.tables .cur { background: #f8f8f8; color: #c6c6c6; }
.cur em { margin-left: auto; margin-right: 11px; display: flex; gap: 2px; }
.cur em b { width: 3.500px; height: 3.500px; border-radius: 50%; background: #d0d0d0; }

.editor { width: 679px; flex: none; display: flex; flex-direction: column; }
.crumbs { height: 59px; flex: none; border-bottom: 1px solid #f4f4f4; display: flex; align-items: center; padding: 0 0 2px 39px; font-size: 14px; color: #c6c6c6; white-space: nowrap; }
.org { width: 125px; letter-spacing: -.05px; }
.pill { width: 57px; height: 27px; border: 1px solid #f1f1f1; border-radius: 14px; text-align: center; line-height: 24px; color: #d4d4d4; margin-right: 9px; }
.crumbs .sl { width: 8px; height: 16px; color: #e8e8e8; margin-left: 26px; margin-right: 31px; }
.prj { width: 110px; letter-spacing: .15px; }
.crumbs .s2 { margin-left: 26px; margin-right: 21px; }
.enb { margin-left: 12px; letter-spacing: .1px; }
.actions { height: 51px; flex: none; display: flex; align-items: center; padding: 0 0 1px 40px; font-size: 14.200px; color: #c6c6c6; background: #fefefe; border-bottom: 1px solid #f3f3f3; }
.fl { margin: 0 38px 0 11px; width: 34px; }
.so { margin: 0 34px 0 10px; width: 29px; }
.actions i { width: 1px; height: 25px; background: #eee; margin-right: 19px; }
.insert { width: 93px; height: 32px; background: #cde5da; border: 1px solid #c6efdc; border-radius: 6px; color: #fff; font-weight: 500; display: flex; align-items: center; gap: 12px; padding-left: 12px; }
.grid { height: 710px; overflow: hidden; flex: none; }
.r { display: grid; grid-template-columns: 80px 151px 312px 1fr; height: 43.720px; font-size: 14.300px; letter-spacing: .6px; color: #c8c8c8; }
.r > div { border-right: 1px solid #f4f4f4; border-bottom: 1px solid #f4f4f4; display: flex; align-items: center; padding: 0 0 1px 11px; white-space: nowrap; }
.r > div:nth-child(2) { border-right: 5px solid #f5f5f5; }
.r > div:nth-child(4) { color: #e2e2e2; border-right: 0; letter-spacing: .3px; }
.h b { font-weight: 600; color: #c6c6c6; margin-right: 10px; letter-spacing: 0; font-size: 14px; }
.r.h > div { padding-bottom: 3px; }
.h span { color: #dadada; letter-spacing: .1px; font-size: 14px; }
.h .si { width: 15px; margin-left: auto; margin-right: 18px; color: #dcdcdc; }
.h .key { width: 20px; height: 12px; fill: none; stroke: #c5efdc; stroke-width: 1.600; margin: 2px 8px 0 -1px; }
.h div:nth-child(4) b { letter-spacing: .15px; }
.cb { width: 20px; height: 20px; border: 1px solid #f3f3f3; border-radius: 5px; display: block; flex: none; }
.grid .cb { margin-left: -1px; margin-top: 3px; }
.hscroll { height: 20px; flex: none; border-bottom: 1px solid #f2f2f2; display: flex; align-items: center; padding: 0 0 1px 10px; gap: 9px; background: #fefefe; }
.hscroll div { flex: 1; height: 11px; background: #e0e0e0; border-radius: 5px 0 0 5px; }
.pager { flex: 1; display: flex; align-items: center; padding-left: 25px; font-size: 17px; color: #d3d3d3; padding-bottom: 2px; white-space: nowrap; }
.pb { height: 32px; border: 1px solid #f0f0f0; border-radius: 7px; display: flex; align-items: center; justify-content: center; font-size: 14px; letter-spacing: .1px; color: #c6c6c6; padding-bottom: 1px; }
.ar { width: 34px; border-color: #f6f6f6; }
.ar svg { width: 13px; color: #d6d6d6; }
.pg { margin-left: 11px; width: 48px; letter-spacing: -.5px; }
.in { width: 59px; justify-content: flex-start; padding-left: 14px; margin-right: 12px; }
.of { width: 36px; letter-spacing: -.6px; }
.rw { width: 86px; margin: 0 11px 0 10px; }
.rec { letter-spacing: -.25px; }

/* side panel */
.panel { flex: 1; border-left: 1px solid #e4e4e4; background: #fcfcfc; box-shadow: 0 0 25px #0000001f; display: flex; flex-direction: column; color: #222; }
.panel > header { height: 70px; flex: none; border-bottom: 1px solid #e4e4e4; display: flex; align-items: center; padding: 0 0 3px 30px; font-size: 18.900px; letter-spacing: .1px; gap: 9px; white-space: nowrap; }
code { font: 17.500px "Liberation Mono", monospace; letter-spacing: 0; background: #f1f1f1; border: 1px solid #dadada; border-radius: 3px; height: 29px; width: 120px; line-height: 30px; padding-left: 7px; margin-top: 1px; }
.body { height: 742px; flex: none; overflow: hidden; display: flex; border-bottom: 1px solid #dcdcdc; }
.content { width: 820px; }
.card { width: 761px; height: 36px; margin-left: 30px; border: 1px solid #e6e6e6; border-top: 0; border-radius: 0 0 8px 8px; display: flex; align-items: flex-end; padding: 0 0 16px 63px; }
.btn { background: #fefefe; border: 1px solid #e2e2e2; border-radius: 7px; height: 33px; display: flex; align-items: center; font-size: 14.300px; padding: 0 0 2px 13px; flex: none; box-shadow: 0 1px 2px #0000000f; white-space: nowrap; }
.btn svg { margin-right: 10px; width: 17px; height: 17px; stroke-width: 1.800; margin-top: 2px; }
.card .btn { width: 189px; }
.rt { display: flex; padding: 51px 0 0 30px; height: 141px; border-bottom: 1px solid #dedede; font-size: 16.200px; color: #555; }
.rt .cb { margin: 1px 18px 0 0; }
.rt p { line-height: 25px; margin-top: -1px; letter-spacing: .25px; }
.rt .d { color: #777; margin-top: 0; letter-spacing: .1px; }
.panel .cb { border-color: #d4d4d4; box-shadow: 0 1px 2px #0000000d; background: #fff; }
.colhead { display: flex; justify-content: space-between; align-items: center; padding: 39px 29px 0 30px; }
.colhead h2 { font-size: 18.800px; letter-spacing: .2px; padding-bottom: 3px; }
.colhead .btn { width: 171px; }
.labels { display: grid; grid-template-columns: 182px 183px 219px auto; padding: 20px 0 0 45px; font-size: 14.300px; color: #777; line-height: 20px; }
.labels span { display: flex; align-items: center; gap: 11px; }
.labels svg { width: 18px; height: 18px; }
.cr { display: grid; grid-template-columns: 144px 37px 181px 217px 20px auto 12px; align-items: center; height: 52px; padding: 0 35px 0 30px; font-size: 16.400px; }
.first { margin: 10px 15px 15px 16px; height: 62px; background: #f3f3f3; border-radius: 7px; padding: 0 20px 0 14px; }
.nm { height: 37px; border: 1px solid #c9c9c9; border-right-color: #dcdcdc; border-radius: 7px 0 0 7px; background: #f6f6f6; padding: 0 0 2px 15px; display: flex; align-items: center; letter-spacing: .2px; }
.first .nm { background: #ececec; }
.lk { height: 37px; border: 1px dashed #d2d2d2; border-left: 0; border-radius: 0 7px 7px 0; display: flex; align-items: center; justify-content: center; }
.lk.linked { border: 1px solid #dfdfdf; border-left: 0; }
.lk svg { width: 16px; height: 16px; fill: none; stroke: #222; stroke-width: 1.800; stroke-linecap: round; }
.ty, .df { height: 42px; border: 1px solid #c6c6c6; border-radius: 7px; background: #f3f3f3; display: flex; align-items: center; box-shadow: 0 1px 1px #0000000a; }
.ty { margin-left: 9px; margin-right: -9px; padding-left: 16px; padding-bottom: 1px; }
.ty svg { width: 19px; height: 19px; margin-right: 16px; fill: none; stroke: #222; stroke-width: 1.800; }
.ty .ud { margin: 0 14px 0 auto; width: 18px; height: 18px; stroke: #aaa; stroke-width: 2.600; }
.ty.ro { background: #fafafa; border-color: #e0e0e0; color: #999; box-shadow: none; }
.ty.ro svg { margin-right: 15px; }
.df { margin-left: 18px; margin-right: -18px; background: #f6f6f6; color: #b4b4b4; padding: 0 7px 3px 15px; }
.df.dis { background: #f5f5f5; border-color: #ebebeb; color: #e2e2e2; box-shadow: none; }
.df div { margin: 2px 0 0 auto; width: 29px; height: 33px; border: 1px solid #e0e0e0; border-radius: 7px; background: #fefefe; display: flex; align-items: center; justify-content: center; }
.df div svg { width: 15px; height: 15px; fill: none; stroke: #333; stroke-width: 2; }
.cr .cb { margin-left: 29px; margin-top: 2px; }
.panel .ck { background: #3ecf8e; border: 0; }
.ck svg { fill: none; stroke: #fff; stroke-width: 2.200; }
.cfg { display: flex; align-items: center; justify-content: flex-end; padding-right: 22px; }
.cfg b { width: 20px; height: 20px; border-radius: 50%; background: #141414; color: #fff; font-size: 13px; line-height: 20px; text-align: center; margin-right: -4px; z-index: 1; }
.cfg svg { width: 19px; height: 19px; fill: none; stroke: #8a8a8a; stroke-width: 1.400; margin-right: -1px; }
.rm { width: 14px; height: 14px; fill: none; stroke: #333; stroke-width: 1.900; }
.addbox { margin: 25px 29px 0 30px; height: 90px; border: 1px dashed #cfcfcf; border-radius: 5px; padding-top: 14px; }
.addbox .btn { width: 108px; margin-left: 326px; padding-bottom: 5px; }
.vscroll { flex: 1; display: flex; flex-direction: column; align-items: center; padding: 10px 0 9px 2px; fill: #8a8a8a; }
.vscroll div { width: 11px; height: 292px; border-radius: 6px; background: #8b8b8b; margin: 182px 0 auto; }
.panel footer { flex: 1; display: flex; justify-content: flex-end; align-items: flex-start; gap: 16px; padding: 19px 14px 0 0; }
.panel footer .btn { height: 32px; padding: 0 0 2px; justify-content: center; font-size: 14.200px; }
.cancel { width: 74px; }
.panel .save { width: 59px; background: #34996a; border-color: #35c483; color: #fff; font-weight: 500; }

/* red annotation frames laid over the page */
.mark { position: absolute; border: 3px solid #ed1c24; }
.m1 { left: 1228px; top: 126px; width: 139px; height: 84px; }
.m2 { left: 1086px; top: 411px; width: 670px; height: 518px; }

/* taskbar */
.taskbar { margin-top: 5px; height: 59px; flex: none; display: flex; justify-content: space-between; border-top: 1px solid #b5bcb8; background: linear-gradient(90deg, #f1dfd0 0, #f3dfcf 560px, #f1e0c8 670px, #edebbd 740px, #d6efca 800px, #c8f0da 870px, #c2efe4 960px, #c2eeea 1080px, #cde9ee 1220px, #cfe5ee 1915px); font-family: "Open Sans", "Noto Sans CJK TC", sans-serif; color: #111; }
.apps { display: flex; padding-left: 16px; gap: 7.100px; }
.apps > div { width: 48px; height: 48px; margin-top: 5px; border-radius: 5px; display: flex; align-items: center; justify-content: center; position: relative; }
.apps > div:first-child { margin-right: 1.500px; }
.apps svg { width: 30px; height: 30px; }
.apps .over { width: 36px; height: 38px; margin: -8px -5px 0 0; }
.hot { background: #f9f0ea; box-shadow: 0 0 1px #a99; }
.pink { background: #fce4e6; }
.run::after, .dot::after, .pink::after { content: ""; position: absolute; bottom: 0; width: 8px; height: 4px; border-radius: 2px; background: #8a7f78; }
.run::after { width: 19px; background: #24808f; }
.pink::after { background: #c42b1c; }
.tray { display: flex; align-items: center; padding: 0 20px 1px 0; }
.tray > div { width: 40.050px; display: flex; justify-content: center; }
.tray svg { width: 20px; height: 20px; }
.ime { font-size: 18px; font-weight: 600; }
.tray .wifi { width: 36px; }
.tray .vol { width: 25px; }
.tray .bat { width: 33px; }
.tray .clock { width: 84px; flex-direction: column; align-items: flex-end; font-size: 14.800px; line-height: 20px; letter-spacing: -.3px; margin-left: 2px; white-space: nowrap; }
.tray .bell { margin-left: 9px; }
```
